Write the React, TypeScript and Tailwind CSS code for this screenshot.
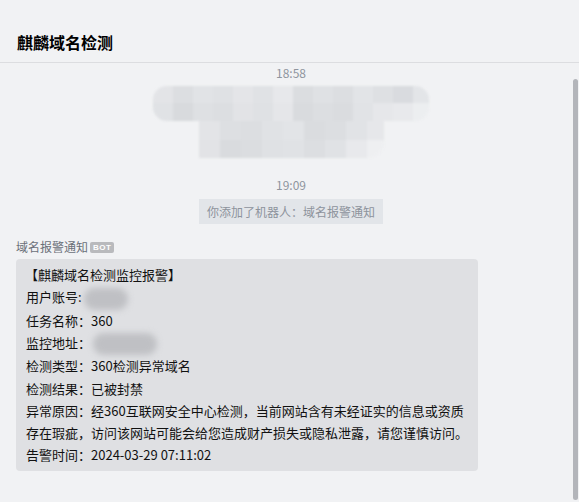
const topCells = ['#e3e4e7', '#dcdee1', '#e1e3e6', '#dfe1e4', '#e4e5e8', '#e0e2e5', '#e7e8eb', '#dbdde0', '#dfe1e4', '#dcdee1', '#e2e4e7', '#dee0e3', '#d9dbdf', '#e3e5e8'];
const topCells2 = ['#e0e2e5', '#d8dadd', '#dee0e3', '#dcdee1', '#e2e3e6', '#dfe1e4', '#e5e6e9', '#d9dbde', '#dcdee1', '#dadcdf', '#e1e3e6', '#e6e7ea', '#e8e9ec', '#eceef0'];
const botCells = ['#e3e4e7', '#dddfe2', '#dcdee1', '#e0e2e5', '#e2e4e7', '#dadcdf', '#dcdee1', '#e1e3e6', '#e6e7ea'];
const botCells2 = ['#e2e3e6', '#d9dbde', '#dbdde0', '#dfe1e4', '#e0e2e5', '#dcdee1', '#e0e2e5', '#e8e9ec', '#eeeff1'];

function Mosaic() {
  return (
    <div className="flex flex-col items-center mt-[4px] blur-[1px]">
      <div className="flex flex-col w-[276px] rounded-[14px] overflow-hidden">
        <div className="flex">
          {topCells.map((c, i) => (
            <div key={i} className="w-[20px] h-[17px] shrink-0" style={{ background: c }} />
          ))}
        </div>
        <div className="flex">
          {topCells2.map((c, i) => (
            <div key={i} className="w-[20px] h-[18px] shrink-0" style={{ background: c }} />
          ))}
        </div>
      </div>
      <div className="flex flex-col w-[185px] rounded-br-[16px] overflow-hidden">
        <div className="flex">
          {botCells.map((c, i) => (
            <div key={i} className="w-[21px] h-[19px] shrink-0" style={{ background: c }} />
          ))}
        </div>
        <div className="flex">
          {botCells2.map((c, i) => (
            <div key={i} className="w-[21px] h-[18px] shrink-0" style={{ background: c }} />
          ))}
        </div>
      </div>
    </div>
  );
}

function Blob({ w }: { w: string }) {
  return <span className={`inline-block align-middle h-[22px] ${w} rounded-full bg-[#bfc0c4] blur-[3px] ml-[2px]`} />;
}

export default function App() {
  const lines: React.ReactNode[] = [
    '【麒麟域名检测监控报警】',
    <>用户账号:<Blob w="w-[44px]" /></>,
    '任务名称：360',
    <>监控地址：<Blob w="w-[64px]" /></>,
    '检测类型：360检测异常域名',
    '检测结果：已被封禁',
    '异常原因：经360互联网安全中心检测，当前网站含有未经证实的信息或资质存在瑕疵，访问该网站可能会给您造成财产损失或隐私泄露，请您谨慎访问。',
    '告警时间：2024-03-29 07:11:02',
  ];

  return (
    <div
      className="relative w-[579px] h-[502px] overflow-hidden bg-[#f1f2f4] text-[#1f1f1f]"
      style={{ fontFamily: '"Noto Sans CJK SC", "Noto Sans", sans-serif' }}
    >
      {/* header */}
      <header className="h-[63px] border-b border-[#dcdde0] flex items-end pb-[9px] pl-[17px]">
        <h1 className="text-[16px] font-bold leading-[22px] text-black">麒麟域名检测</h1>
      </header>

      {/* chat */}
      <main className="flex flex-col pl-4 pr-[13px]">
        <div className="text-center text-[12px] leading-[18px] text-[#8f959e] mt-[1px]">18:58</div>
        <Mosaic />
        <div className="text-center text-[12px] leading-[18px] text-[#8f959e] mt-[18px]">19:09</div>
        <div className="flex justify-center mt-[5px]">
          <div className="bg-[#e2e5e9] text-[#8d939c] text-[12px] leading-[25px] px-[8px]">
            你添加了机器人：域名报警通知
          </div>
        </div>

        <div className="flex items-center gap-[2px] mt-[16px] h-[14px]">
          <span className="text-[12px] leading-[14px] text-[#6b7079]">域名报警通知</span>
          <span className="bg-[#b9babd] text-white text-[8px] font-bold leading-[11px] h-[11px] px-[3px] rounded-[2px] tracking-[0.5px]" style={{ fontFamily: '"Liberation Sans", sans-serif' }}>
            BOT
          </span>
        </div>

        <div className="mt-[5px] w-[462px] bg-[#dfe0e3] rounded-[4px] pl-[10px] pr-[10px] pt-[5px] pb-[4px] text-[13px] leading-[22.25px] text-[#111111]">
          {lines.map((l, i) => (
            <div key={i} className={i === 0 ? '-ml-[1px]' : ''}>{l}</div>
          ))}
        </div>
      </main>

      {/* scrollbar overlay */}
      <div className="absolute right-[1px] top-[79px] w-[5px] h-[421px] rounded-[3px] bg-[#b3b5ba]" />
    </div>
  );
}
